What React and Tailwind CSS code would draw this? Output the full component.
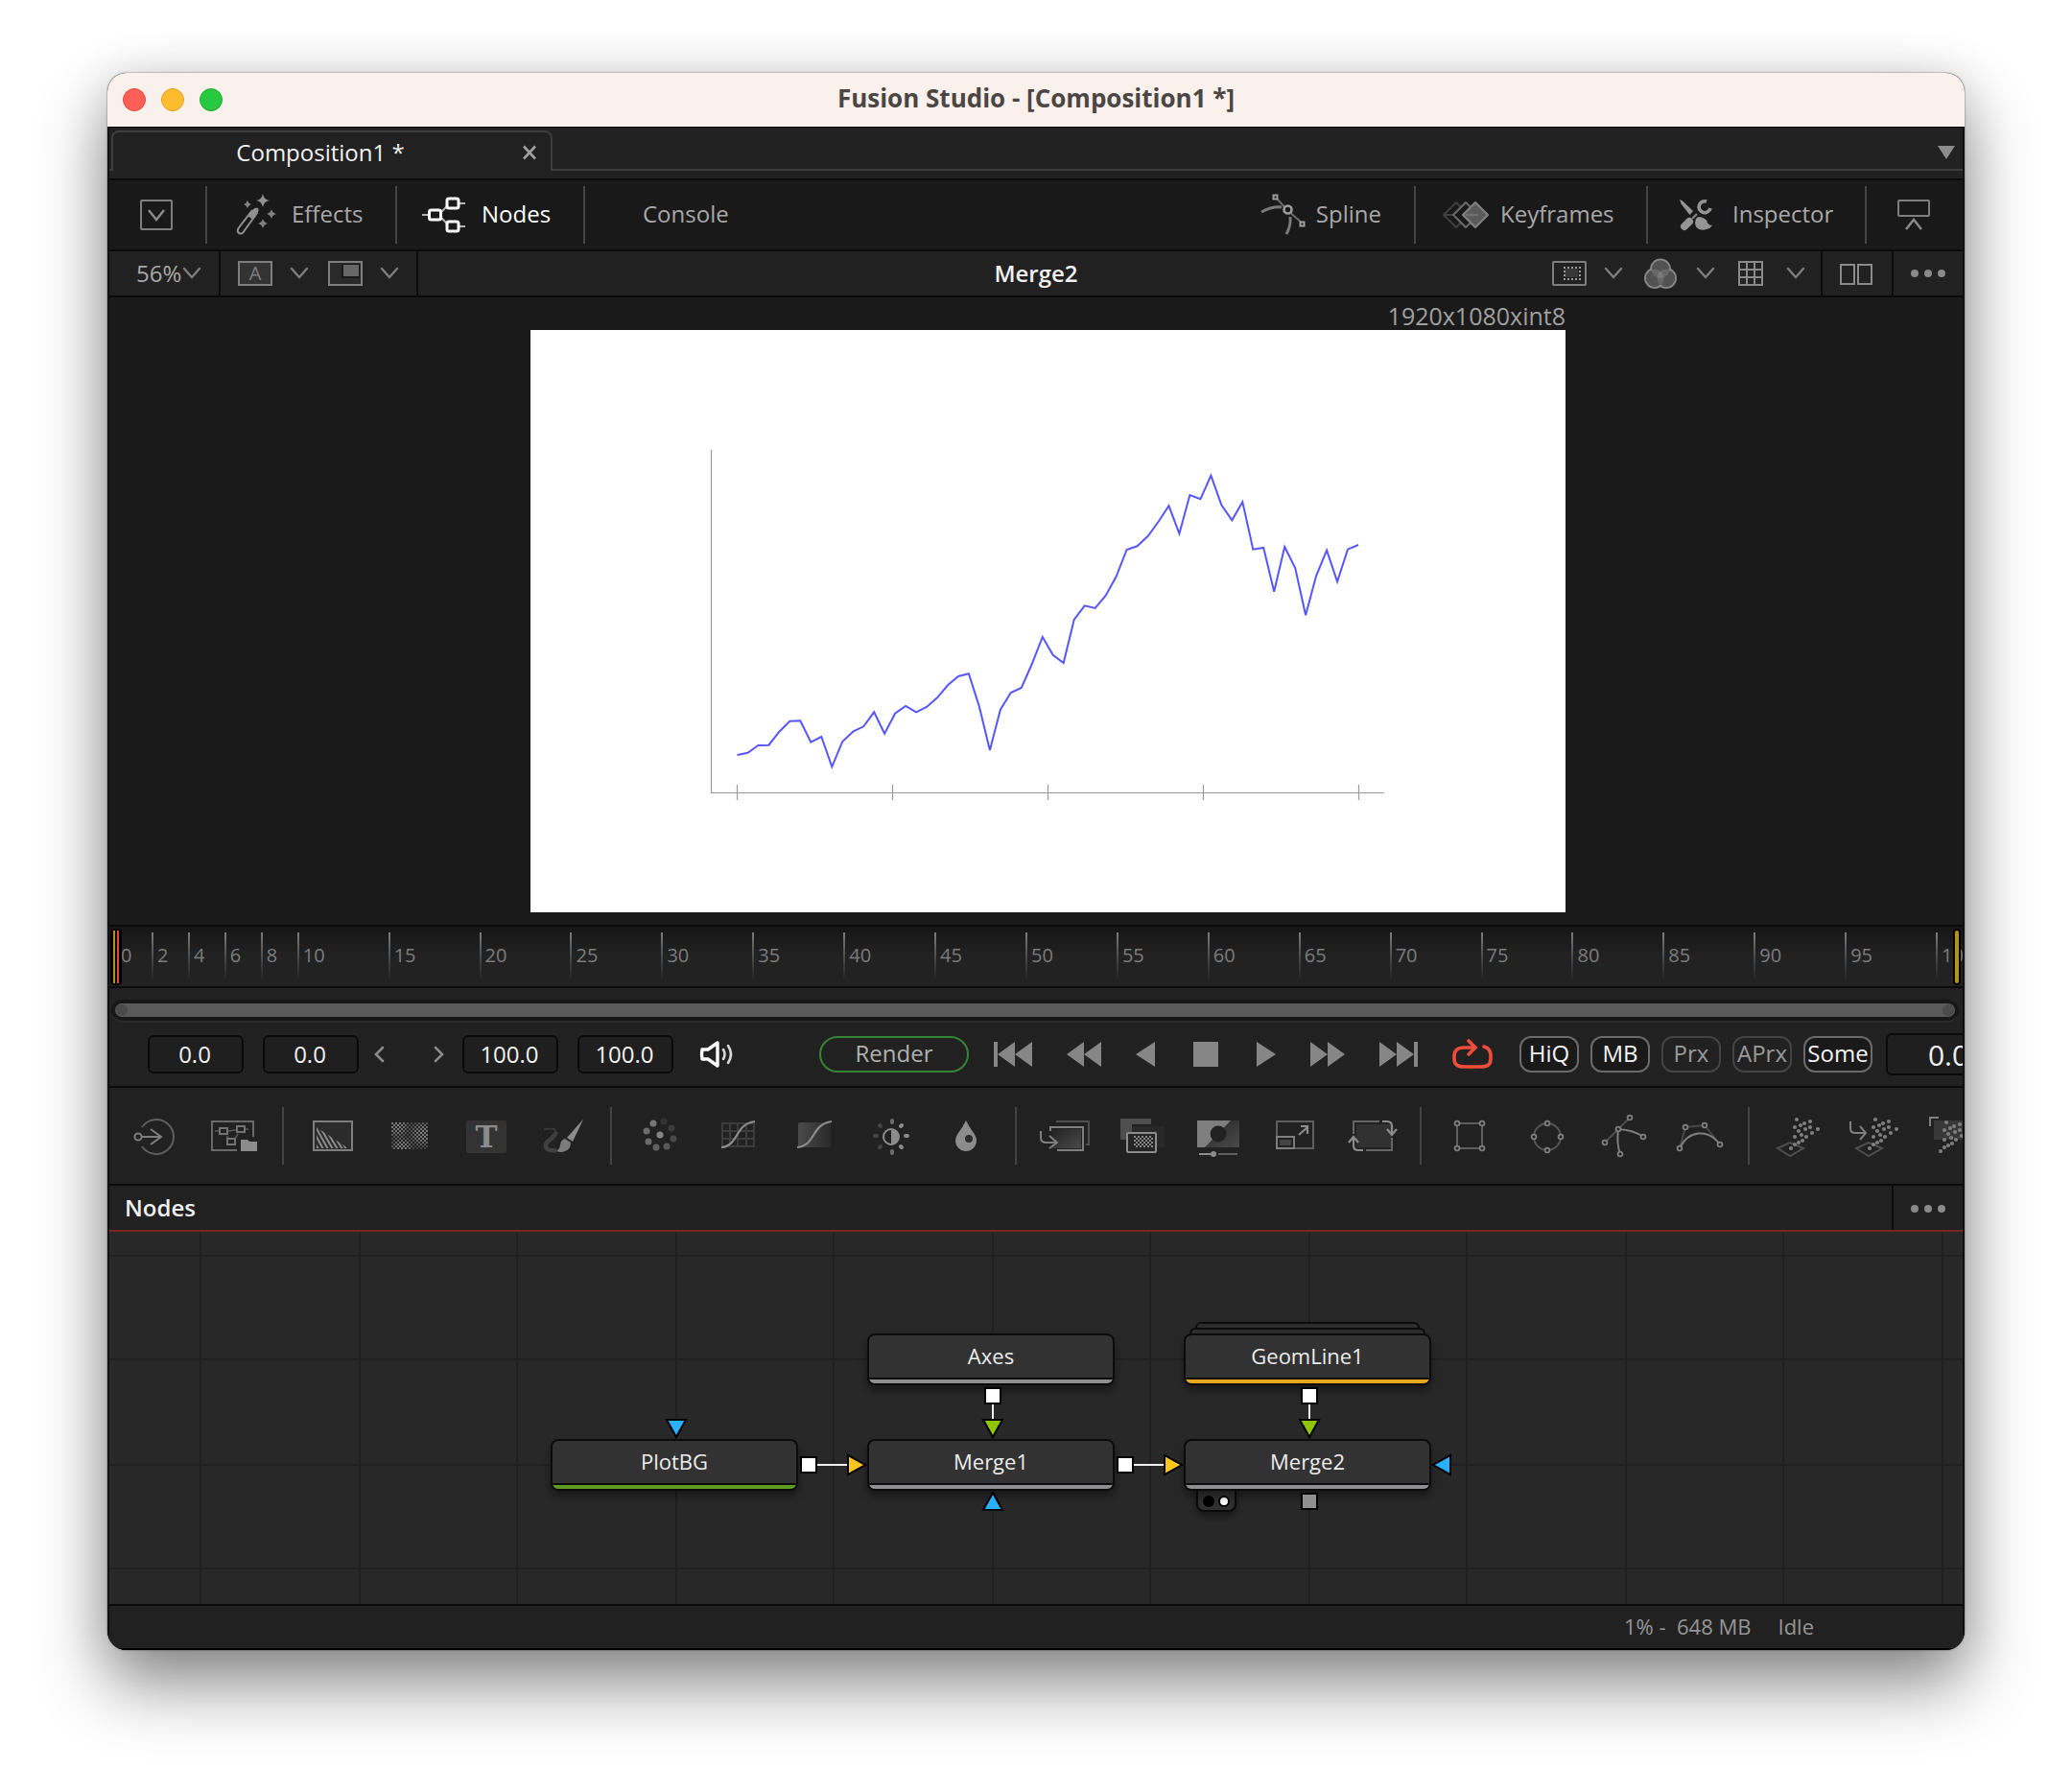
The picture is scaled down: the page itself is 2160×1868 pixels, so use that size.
import React from "react";

const sans = "font-['Open_Sans','Noto_Sans',sans-serif]";

/* ---------- shared pieces ---------- */

function Svg({ w, h, x = 0, y = 0, children, className = "" }) {
  return (
    <svg
      width={w}
      height={h}
      viewBox={`${x} ${y} ${w} ${h}`}
      fill="none"
      aria-hidden="true"
      className={`shrink-0 ${className}`}
    >
      {children}
    </svg>
  );
}

function Chevron() {
  return (
    <Svg w={20} h={14}>
      <path d="M2 2 L10 11 L18 2" stroke="#7d7d7d" strokeWidth="2.4" strokeLinecap="round" />
    </Svg>
  );
}

function Dots() {
  return (
    <Svg w={36} h={10}>
      {[4, 18, 32].map((cx) => (
        <circle key={cx} cx={cx} cy="5" r="4" fill="#8a8a8a" />
      ))}
    </Svg>
  );
}

function Divider({ tall = false }) {
  return <div className={`w-0.5 shrink-0 bg-[#444444] ${tall ? "h-[60px]" : "h-full"}`} />;
}

function IconButton({ label, children, className = "" }) {
  return (
    <button type="button" aria-label={label} className={`flex shrink-0 items-center justify-center ${className}`}>
      {children}
    </button>
  );
}

/* ---------- title and tabs ---------- */

function TitleBar() {
  return (
    <header className="relative flex h-[57px] items-center justify-center border-b border-black bg-[#fbf1ec]">
      <div className="absolute inset-y-0 left-4 flex items-center gap-4">
        <button type="button" aria-label="Close" className="size-6 rounded-full border border-[#e2463f] bg-[#ff5f57]" />
        <button type="button" aria-label="Minimize" className="size-6 rounded-full border border-[#e0a028] bg-[#febc2e]" />
        <button type="button" aria-label="Zoom" className="size-6 rounded-full border border-[#1fab30] bg-[#28c840]" />
      </div>
      <h1 className="pb-1 text-[26px] leading-8 font-bold text-[#4b4644]">Fusion Studio - [Composition1 *]</h1>
    </header>
  );
}

function TabBar() {
  return (
    <div className="flex h-[55px] flex-col border-b-2 border-[#0b0b0b] bg-[#212121] pt-[3px]">
      <div className="flex h-[42px]">
        <div className="w-0.5 border-b-2 border-[#3d3d3d]" />
        <div className="flex w-[460px] items-center rounded-t-lg border-2 border-b-0 border-[#3d3d3d]">
          <span className="w-5" />
          <span className="flex-1 pt-0.5 text-center text-2xl text-[#f2f2f2]">Composition1 *</span>
          <IconButton label="Close tab" className="w-11 pt-0.5">
            <Svg w={16} h={16}>
              <path d="M2 1.5 L14 14.5 M14 1.5 L2 14.5" stroke="#a0a0a0" strokeWidth="2.6" />
            </Svg>
          </IconButton>
        </div>
        <div className="flex flex-1 items-center justify-end border-b-2 border-[#3d3d3d] pr-2">
          <IconButton label="Tab list" className="pt-1.5">
            <Svg w={18} h={14}>
              <path d="M0 0 H18 L9 14 Z" fill="#8c8c8c" />
            </Svg>
          </IconButton>
        </div>
      </div>
    </div>
  );
}

/* ---------- main toolbar ---------- */

function WandIcon() {
  const spark = (x, y, r) =>
    `M${x} ${y - r} Q${x + 1} ${y - 1} ${x + r} ${y} Q${x + 1} ${y + 1} ${x} ${y + r} Q${x - 1} ${y + 1} ${x - r} ${y} Q${x - 1} ${y - 1} ${x} ${y - r} Z`;
  return (
    <Svg w={42} h={44}>
      <path d="M17 17 L2.5 36 Q0.5 40 4 41.5 Q6.5 42 8 39.5 L22 20" stroke="#909090" strokeWidth="2" />
      <path d="M17 17 Q21 13.500 23 15 Q24.500 17 22 21 L18 27 L12 23 Z" fill="#909090" />
      <path d={spark(28, 7, 7)} fill="#909090" />
      <path d={spark(12, 11, 4)} fill="#808080" />
      <path d={spark(37, 21, 5)} fill="#808080" />
      <path d={spark(28, 31, 5)} fill="#808080" />
    </Svg>
  );
}

function NodesIcon() {
  return (
    <Svg w={46} h={38}>
      <path d="M0 19 H6 M20 16 L27 9 M20 22 L27 29 M39 7 H45 M39 31 H45" stroke="#b5b5b5" strokeWidth="2" />
      <g stroke="#ffffff" strokeWidth="3">
        <rect x="7.500" y="14" width="12" height="10" rx="2" />
        <rect x="26" y="2" width="12" height="10" rx="2" />
        <rect x="26" y="26" width="12" height="10" rx="2" />
      </g>
    </Svg>
  );
}

function SplineIcon() {
  return (
    <Svg w={48} h={44}>
      <path d="M16 4 L28 17 L44 31" stroke="#6a6a6a" strokeWidth="2" />
      <path d="M1 19 Q12 13 22 14 M31 24 Q32 33 27 42" stroke="#7a7a7a" strokeWidth="3" />
      <circle cx="28.500" cy="16.500" r="4" fill="#191919" stroke="#9c9c9c" strokeWidth="2.6" />
      <rect x="13.500" y="1.500" width="4" height="4" fill="#191919" stroke="#9c9c9c" strokeWidth="2" />
      <rect x="41.500" y="29.500" width="4" height="4" fill="#191919" stroke="#9c9c9c" strokeWidth="2" />
    </Svg>
  );
}

function KeyframesIcon() {
  return (
    <Svg w={48} h={28}>
      <path d="M1 14 L14 1 L27 14 L14 27 Z M1 14 H20" stroke="#3f3f3f" strokeWidth="2" />
      <path d="M11 14 L24 1 L37 14 L24 27 Z" fill="#191919" stroke="#6a6a6a" strokeWidth="2" />
      <path d="M21 14 L34 1 L47 14 L34 27 Z" fill="#5a5a5a" stroke="#838383" strokeWidth="2" />
      <path d="M24 14 H37" stroke="#7a7a7a" strokeWidth="1.500" />
    </Svg>
  );
}

function InspectorIcon() {
  return (
    <Svg w={36} h={34}>
      <path d="M1 1 L4 2.500 L15 13 L11.500 17 L2.500 5.500 Z" fill="#959595" />
      <path d="M29 3 A6 6 0 1 0 33 10" stroke="#959595" strokeWidth="3.600" />
      <path d="M14 21 L19 16" stroke="#808080" strokeWidth="2.400" />
      <path d="M6 29 L11 24" stroke="#959595" strokeWidth="8" strokeLinecap="round" />
      <path d="M18 21 Q20 18 24 19.500 Q30 22 30 25.500 Q32 28 35 28 Q33 31 29 32 Q22 34 18.500 30 Q16 26 18 21 Z" fill="#959595" />
    </Svg>
  );
}

function ToolTab({ icon, label, className, active = false }) {
  return (
    <button
      type="button"
      className={`flex h-full shrink-0 items-center text-2xl ${active ? "text-white" : "text-[#a8a8a8]"} ${className}`}
    >
      {icon}
      <span className="pb-0.5">{label}</span>
    </button>
  );
}

function MainToolbar() {
  return (
    <nav className="flex h-[74px] border-b-2 border-[#0b0b0b] bg-[#191919] py-1.5">
      <IconButton label="Toggle panel" className="w-[100px] pr-0.5">
        <Svg w={34} h={32}>
          <rect x="1" y="1" width="32" height="30" rx="1" stroke="#7e7e7e" strokeWidth="2" />
          <path d="M9 11 L17 21 L25 11" stroke="#8a8a8a" strokeWidth="2.400" />
        </Svg>
      </IconButton>
      <Divider />
      <ToolTab icon={<WandIcon />} label="Effects" className="w-[196px] gap-4 pl-[30px]" />
      <Divider />
      <ToolTab icon={<NodesIcon />} label="Nodes" active className="w-[194px] gap-4 pl-[26px]" />
      <Divider />
      <ToolTab label="Console" className="w-[194px] pl-[60px]" />
      <div className="flex-1" />
      <ToolTab icon={<SplineIcon />} label="Spline" className="gap-2.5 pr-[34px]" />
      <Divider />
      <ToolTab icon={<KeyframesIcon />} label="Keyframes" className="w-[240px] gap-3 pl-7" />
      <Divider />
      <ToolTab icon={<InspectorIcon />} label="Inspector" className="w-[226px] gap-5 pl-8" />
      <Divider />
      <IconButton label="Toggle viewer" className="w-[100px] pr-0.5">
        <Svg w={34} h={32}>
          <rect x="1" y="1" width="32" height="16" rx="1" stroke="#7e7e7e" strokeWidth="2" />
          <path d="M9 31 L17 21 L25 31" stroke="#8a8a8a" strokeWidth="2.400" />
        </Svg>
      </IconButton>
    </nav>
  );
}

/* ---------- viewer ---------- */

function ChannelsIcon() {
  const lobes = [
    [17, 11.5],
    [11, 21],
    [23, 21],
  ];
  return (
    <Svg w={34} h={32}>
      {lobes.map(([cx, cy]) => (
        <circle key={cx} cx={cx} cy={cy} r="10" stroke="#858585" strokeWidth="2" />
      ))}
      {lobes.map(([cx, cy]) => (
        <circle key={cx} cx={cx} cy={cy} r="9" fill="#383838" />
      ))}
      {lobes.map(([cx, cy]) => (
        <circle key={cx} cx={cx} cy={cy} r="9.5" fill="#cccccc" fillOpacity="0.18" />
      ))}
    </Svg>
  );
}

function ViewerHeader() {
  return (
    <div className="grid h-12 grid-cols-[1fr_auto_1fr] border-b-2 border-[#0b0b0b] bg-[#212121]">
      <div className="flex">
        <label className="flex w-[116px] items-center border-r-2 border-[#0b0b0b] pl-7">
          <select aria-label="Viewer zoom" className="appearance-none bg-transparent text-2xl text-[#a8a8a8]">
            <option>56%</option>
          </select>
          <Chevron />
        </label>
        <div className="flex w-[206px] items-center border-r-2 border-[#0b0b0b] pl-[18px]">
          <IconButton label="Buffer" className="mr-[18px]">
            <Svg w={36} h={26}>
              <rect x="1" y="1" width="34" height="24" fill="#333333" stroke="#7e7e7e" strokeWidth="2" />
              <text x="18" y="20" textAnchor="middle" fontSize="20" fill="#7e7e7e" className={sans}>A</text>
            </Svg>
          </IconButton>
          <IconButton label="Buffer options" className="mr-5"><Chevron /></IconButton>
          <IconButton label="Sub view" className="mr-[18px]">
            <Svg w={36} h={26}>
              <rect x="1" y="1" width="34" height="24" fill="#2a2a2a" stroke="#7e7e7e" strokeWidth="2" />
              <rect x="14" y="3" width="19" height="15" fill="#191919" />
              <rect x="16" y="4" width="16" height="12" fill="#666666" />
            </Svg>
          </IconButton>
          <IconButton label="Sub view options"><Chevron /></IconButton>
        </div>
      </div>
      <h2 className="self-center text-2xl leading-8 font-semibold text-[#f0f0f0]">Merge2</h2>
      <div className="flex items-center justify-end">
        <IconButton label="Region" className="mr-[18px]">
          <Svg w={36} h={26}>
            <rect x="1" y="1" width="34" height="24" rx="1" stroke="#7e7e7e" strokeWidth="2" />
            <rect x="13" y="8" width="14" height="9" fill="#383838" />
            <path d="M12 7 H30 M12 19 H30" stroke="#9a9a9a" strokeWidth="2" strokeDasharray="2 2" />
            <path d="M13 10 V18 M29 10 V18" stroke="#9a9a9a" strokeWidth="2" strokeDasharray="2 2" />
          </Svg>
        </IconButton>
        <IconButton label="Region options" className="mr-[22px]"><Chevron /></IconButton>
        <IconButton label="Color channels" className="mr-5"><ChannelsIcon /></IconButton>
        <IconButton label="Channel options" className="mr-6"><Chevron /></IconButton>
        <IconButton label="Grid" className="mr-6">
          <Svg w={26} h={26}>
            <path d="M1 1 H25 V25 H1 Z M9 1 V25 M17 1 V25 M1 9 H25 M1 17 H25" stroke="#8a8a8a" strokeWidth="2" />
          </Svg>
        </IconButton>
        <IconButton label="Grid options" className="mr-4"><Chevron /></IconButton>
        <IconButton label="Split view" className="h-full w-[74px] border-l-2 border-[#0b0b0b] pr-0.5">
          <Svg w={34} h={22} className="mt-0.5">
            <path d="M1 1 H15 V21 H1 Z M19 1 H33 V21 H19 Z" stroke="#8a8a8a" strokeWidth="2" />
          </Svg>
        </IconButton>
        <IconButton label="Viewer menu" className="h-full w-[74px] border-l-2 border-[#0b0b0b]"><Dots /></IconButton>
      </div>
    </div>
  );
}

const series = [
  443, 440.7, 433, 432.7, 418.7, 407.7, 407.3, 429.7, 424, 455.3, 429, 418.7, 413.3, 398.3, 420.7, 399.7, 392, 398.3,
  393, 383.3, 370.3, 361, 358.3, 392.7, 438, 395.7, 378, 373, 348, 320, 338.7, 347, 302, 287.3, 290, 277, 257, 229,
  225.3, 215, 200, 183.3, 212.3, 172, 176.3, 151.7, 182.3, 198.3, 179.3, 228.7, 227, 272.7, 226, 248, 297.3, 256.3,
  229.7, 262.3, 228.7, 224,
];

function Viewer() {
  const points = series.map((y, i) => `${(215.5 + (i * 647.5) / 59).toFixed(1)},${y}`).join(" ");
  return (
    <section className="flex justify-center border-b-2 border-[#0b0b0b] bg-[#1a1a1a] pb-[13px] pl-[25px]">
      <div>
        <p className="h-[34px] text-right text-[25px] leading-[38px] text-[#a0a0a0]">1920x1080xint8</p>
        <svg width="1079" height="607" viewBox="0 0 1079 607" fill="none" className="bg-white" role="img" aria-label="Line plot">
          <path
            d="M188.500 125 V482.500 H890 M215.500 474 V490 M377.500 474 V490 M539.500 474 V490 M701.500 474 V490 M863.500 474 V490"
            stroke="#999999"
            strokeWidth="1.200"
          />
          <polyline points={points} stroke="#5656ff" strokeWidth="2" />
        </svg>
      </div>
    </section>
  );
}

/* ---------- timeline ---------- */

function Tick({ label, className }) {
  return (
    <div className={`flex min-w-0 gap-1 ${className}`}>
      <div className="h-[50px] w-0.5 shrink-0 bg-linear-to-b from-[#7c7c7c] to-[#212121]" />
      <span className="text-xl leading-[48px] whitespace-nowrap text-[#7c7c7c]">{label}</span>
    </div>
  );
}

function Timeline() {
  return (
    <div className="relative flex h-16 overflow-hidden border-b-2 border-[#0b0b0b] bg-linear-to-b from-[#161616] to-[#222222] to-50% pt-1.5 pl-1.5">
      {[0, 2, 4, 6, 8].map((n) => (
        <Tick key={n} label={n} className="flex-[2]" />
      ))}
      {[10, 15, 20, 25, 30, 35, 40, 45, 50, 55, 60, 65, 70, 75, 80, 85, 90, 95].map((n) => (
        <Tick key={n} label={n} className="flex-[5]" />
      ))}
      <Tick label={100} className="w-7 shrink-0" />
      <div className="absolute top-0.5 left-px flex h-[59px] gap-0.5 rounded-sm border-2 border-black bg-black px-px">
        <div className="w-0.5 bg-[#b8901c]" />
        <div className="w-0.5 bg-[#e04b32]" />
      </div>
      <div className="absolute top-0.5 right-[2px] h-[59px] w-2 rounded-sm border-2 border-black bg-[#b8901c]" />
    </div>
  );
}

function RangeBar() {
  return (
    <div className="bg-[#212121] pt-3 pr-1 pl-0.5">
      <div className="flex h-6 rounded-full border-b-2 border-[#2b2b2b] bg-[#171717] px-1 py-1">
        <div className="flex flex-1 items-center justify-between rounded-full bg-[#5a5a5a] px-px">
          <div className="size-3 rounded-full bg-[#4b4b4b]" />
          <div className="size-3 rounded-full bg-[#4b4b4b]" />
        </div>
      </div>
    </div>
  );
}

/* ---------- transport ---------- */

function Field({ label, value }) {
  return (
    <input
      aria-label={label}
      defaultValue={value}
      className="h-10 w-[100px] shrink-0 rounded-md border-2 border-[#0a0a0a] bg-[#1f1f1f] pr-0.5 pb-px text-center text-2xl text-[#f2f2f2]"
    />
  );
}

function Arrow({ d, label }) {
  return (
    <IconButton label={label}>
      <Svg w={12} h={18}>
        <path d={d} stroke="#8a8a8a" strokeWidth="2.600" strokeLinecap="round" />
      </Svg>
    </IconButton>
  );
}

function Play({ label, w, d }) {
  return (
    <IconButton label={label}>
      <Svg w={w} h={26}>
        <path d={d} fill="#868686" />
      </Svg>
    </IconButton>
  );
}

function Toggle({ label, on = false, wide = false }) {
  return (
    <button
      type="button"
      aria-pressed={on}
      className={`flex h-[38px] shrink-0 items-center justify-center rounded-xl border-2 pb-0.5 text-2xl ${wide ? "w-[72px]" : "w-[62px]"} ${on ? "border-[#6a6a6a] bg-[#191919] text-[#f5f5f5]" : "border-[#444444] text-[#9a9a9a]"}`}
    >
      {label}
    </button>
  );
}

function Transport() {
  return (
    <div className="flex h-[68px] items-center overflow-hidden border-b-2 border-[#0b0b0b] bg-[#212121] pl-10">
      <div className="flex shrink-0 gap-5">
        <Field label="Global start" value="0.0" />
        <Field label="Render start" value="0.0" />
      </div>
      <div className="mr-[18px] ml-4 flex shrink-0 gap-[50px]">
        <Arrow label="Range back" d="M9 2 L2 9 L9 16" />
        <Arrow label="Range forward" d="M2 2 L9 9 L2 16" />
      </div>
      <div className="flex shrink-0 gap-5">
        <Field label="Render end" value="100.0" />
        <Field label="Global end" value="100.0" />
      </div>
      <IconButton label="Audio" className="ml-[27px]">
        <Svg w={36} h={30}>
          <path d="M19 3 V27 L9 20 H3 Q2 15 3 10 H9 Z" stroke="#ffffff" strokeWidth="3.400" strokeLinejoin="round" />
          <path d="M25 10 Q28 15 25 20 M30 6 Q36 15 30 24" stroke="#d8d8d8" strokeWidth="2.600" strokeLinecap="round" />
        </Svg>
      </IconButton>
      <button
        type="button"
        className="ml-[89px] flex h-[38px] w-[156px] shrink-0 items-center justify-center rounded-full border-2 border-[#338433] pb-0.5 text-2xl text-[#b0b0b0]"
      >
        Render
      </button>
      <div className="ml-[26px] flex shrink-0 gap-9">
        <Play label="First frame" w={40} d="M0 0 H4 V26 H0 Z M22 0 V26 L4 13 Z M40 0 V26 L22 13 Z" />
        <Play label="Fast reverse" w={36} d="M18 0 V26 L0 13 Z M36 0 V26 L18 13 Z" />
        <Play label="Play reverse" w={20} d="M20 0 V26 L0 13 Z" />
      </div>
      <div className="mx-10 flex shrink-0">
        <Play label="Stop" w={26} d="M0 0 H26 V26 H0 Z" />
      </div>
      <div className="flex shrink-0 gap-9">
        <Play label="Play" w={20} d="M0 0 V26 L20 13 Z" />
        <Play label="Fast forward" w={36} d="M0 0 V26 L18 13 Z M18 0 V26 L36 13 Z" />
        <Play label="Last frame" w={40} d="M0 0 V26 L18 13 Z M18 0 V26 L36 13 Z M36 0 H40 V26 H36 Z" />
        <IconButton label="Loop">
          <Svg w={42} h={34}>
            <path
              d="M23 10 H12 Q2 10 2 19 V22 Q2 30 12 30 H30 Q40 30 40 22 V18 Q40 11 33 9"
              stroke="#f04c3a"
              strokeWidth="3.600"
              strokeLinecap="round"
            />
            <path d="M17 3 L24 10 L17 17" stroke="#f04c3a" strokeWidth="3.600" strokeLinecap="round" />
          </Svg>
        </IconButton>
      </div>
      <div className="ml-7 flex shrink-0 gap-3">
        <Toggle label="HiQ" on />
        <Toggle label="MB" on />
        <Toggle label="Prx" />
        <Toggle label="APrx" />
        <Toggle label="Some" on wide />
      </div>
      <input
        aria-label="Current time"
        defaultValue="0.0"
        className="ml-3.5 h-11 w-[130px] shrink-0 rounded-md border-2 border-[#0a0a0a] bg-[#1f1f1f] text-center text-3xl text-[#f2f2f2]"
      />
    </div>
  );
}

/* ---------- tool shelf: every icon is drawn around its own centre ---------- */

const ink = "#7e7e7e";
const dim = "#4e4e4e";
const lit = "#8c8c8c";

const particles = [
  [-1, -17], [13, -15], [7, -13], [3, -11], [-3, -9], [13, -9], [8, -7], [21, -7], [1, -5], [15, -3], [-3, 1], [4, -1],
  [9, 1], [5, 5], [1, 7], [-3, 9], [-7, 13],
];

function Particles({ dx = 0, dy = 0 }) {
  return particles.map(([x, y]) => <circle key={`${x} ${y}`} cx={x + dx} cy={y + dy} r="2.100" fill={ink} />);
}

function Handles({ at }) {
  return at.map(([x, y]) => (
    <circle key={`${x} ${y}`} cx={x} cy={y} r="2.400" fill="#212121" stroke={ink} strokeWidth="1.800" />
  ));
}

const shelf = [
  [
    ["Import", <g stroke={ink} strokeWidth="2">
      <path d="M-16 -9 A18 18 0 1 1 -16 11" stroke="#5e5e5e" />
      <circle cx="-20" cy="1" r="3.600" />
      <path d="M-16 1 H4 M-7 -7 L4 1 L-7 9" />
    </g>],
    ["Macro", <>
      <path d="M20 1 V-15 H-23 V15 H3" stroke="#686868" strokeWidth="2" />
      <path d="M-20 -5 H-15 M-7 -5 L2 -6 M11 -7 H15 M-8 0 L-5 3 M1 3 L4 -2" stroke="#585858" strokeWidth="1.500" />
      <g stroke="#727272" strokeWidth="2">
        <rect x="-15" y="-8" width="8" height="6" /><rect x="3" y="-10" width="8" height="6" /><rect x="-7" y="3" width="8" height="6" />
      </g>
      <path d="M7 4 H14 L16 6 H24 V16 H7 Z" fill={lit} />
    </>],
  ],
  [
    ["Background", <>
      <rect x="-19" y="-15" width="40" height="30" fill="#2b2b2b" stroke={ink} strokeWidth="2" />
      <path
        d="M-22 -10 L-9 14 M-18 -11 L-4 14 M-14 -12 L1 14 M-9 -11 L6 14 M-4 -11 L11 14 M1 -10 L15 14 M-27 -8 L-14 14 M7 -8 L20 14"
        stroke={lit}
        strokeWidth="2"
        clipPath="url(#wedge)"
      />
    </>],
    ["Fast noise", <rect x="-18" y="-14" width="38" height="28" fill="url(#checker)" mask="url(#cloud)" />],
    ["Text", <>
      <rect x="-20" y="-16" width="42" height="34" rx="2" fill="#333333" />
      <text x="1" y="12" textAnchor="middle" fontSize="31" fontWeight="700" fill={lit} className="font-['DejaVu_Serif',serif]">T</text>
    </>],
    ["Paint", <>
      <path d="M-19 -7 Q-4 -9 -7 -3" stroke="#383838" strokeWidth="2" />
      <path d="M-6 -4 Q-8 1 -14 5 Q-18 8 -17 12 Q-15 16 -6 15" stroke="#404040" strokeWidth="4.500" />
      <path d="M22 -17 L11 6 L5 2 L20 -15 Z" fill={lit} />
      <path d="M3 3 L9 7 Q9 14 3 16 Q-1 18 -6 16 Q-2 13 -2 9 Q-1 4 3 3 Z" fill="#7c7c7c" />
    </>],
  ],
  [
    ["Blur", [
      [0, -1, "#848484"], [-7, -13, "#787878"], [4, -15, "#333333"], [12, -8, "#3d3d3d"], [14, 3, "#484848"],
      [7, 11, "#585858"], [-4, 12, "#606060"], [-12, 6, "#6a6a6a"], [-14, -5, "#6c6c6c"],
    ].map(([x, y, c]) => <circle key={`${x} ${y}`} cx={x} cy={y} r="3.500" fill={c} />)],
    ["Color curves", <>
      <path d="M-15 -13 H18 V11 H-15 Z M-7 -13 V11 M1 -13 V11 M10 -13 V11 M-15 -5 H18 M-15 3 H18" stroke="#3c3c3c" strokeWidth="2" />
      <path d="M-16 12 C3 10 -3 -12 19 -15" stroke={lit} strokeWidth="2.200" />
    </>],
    ["Color gain", <>
      <rect x="-16" y="-14" width="34" height="26" rx="2" fill="url(#shade)" />
      <path d="M-17 12 C3 10 -3 -12 19 -15" stroke={lit} strokeWidth="2.200" />
    </>],
    ["Brightness and contrast", <>
      <circle cx="1" cy="1" r="8" stroke={lit} strokeWidth="2" />
      <path d="M1 -7 A8 8 0 0 1 1 9 Z" fill={lit} />
      <g strokeWidth="4" strokeLinecap="round">
        <path d="M2 -16 V-14 M2 16 V18" stroke="#6c6c6c" />
        <path d="M11 -10 L12 -11 M16 0 H18 M11 11 L12 12" stroke={lit} />
        <path d="M-10 -10 L-11 -11 M-16 0 H-14 M-10 11 L-11 12" stroke="#444444" />
      </g>
    </>],
    ["Hue", <>
      <path d="M-1 -16 Q3 -8 7 -3 Q10 1 10 5 A11 11 0 0 1 -12 5 Q-12 1 -9 -3 Q-5 -8 -1 -16 Z" fill={lit} />
      <circle cx="2" cy="3" r="4" fill="#2c2c2c" />
    </>],
  ],
  [
    ["Merge", <>
      <path d="M-9 -15 H25 V9 H22" stroke={dim} strokeWidth="2" />
      <rect x="-13" y="-7" width="30" height="20" fill="url(#shadeR)" />
      <path d="M-15 -5 V-9 H19 V15 H-8" stroke={ink} strokeWidth="2" />
      <path d="M-25 -5 V2 Q-25 7 -19 7 H-8 M-16 -0 L-8 7 L-16 13" stroke={ink} strokeWidth="2" />
    </>],
    ["Channel booleans", <>
      <rect x="-22" y="-18" width="32" height="22" rx="1" fill="#4e4e4e" />
      <rect x="-10" y="-12" width="20" height="8" fill="#1f1f1f" />
      <rect x="-10" y="-10" width="34" height="22" rx="1" fill="#292929" />
      <rect x="-15" y="-3" width="30" height="20" rx="1" fill="#242424" stroke={lit} strokeWidth="2" />
      <rect x="-8" y="0" width="20" height="12" fill="url(#checker)" />
    </>],
    ["Matte control", <>
      <rect x="-22" y="-16" width="44" height="28" rx="1" fill="url(#shadeR)" />
      <path d="M-22 -16 H13 L-14 12 H-22 Z" fill={ink} />
      <circle cx="0" cy="-2" r="8.400" fill="#212121" />
      <path d="M-20 19 H-8" stroke={lit} strokeWidth="2" />
      <path d="M0 19 H20" stroke="#606060" strokeWidth="2" />
      <circle cx="-5" cy="19" r="3" fill={lit} />
    </>],
    ["Resize", <>
      <rect x="-19" y="-15" width="38" height="28" stroke="#5e5e5e" strokeWidth="2" />
      <rect x="-19" y="1" width="18" height="12" fill="#212121" stroke={ink} strokeWidth="2" />
      <rect x="-16" y="4" width="12" height="6" fill="#444444" />
      <path d="M4 -1 L13 -9 M6 -10 H13 V-2" stroke={lit} strokeWidth="2.200" />
    </>],
    ["Transform", <>
      <rect x="-16" y="-12" width="36" height="24" fill="#313131" />
      <path d="M-19 -2 V-15 H8 M21 2 V15 H-6" stroke="#666666" strokeWidth="2" />
      <path d="M11 -15 H16 Q21 -15 21 -10 V-2 M16 -7 L21 -1 L26 -7 M-9 15 H-14 Q-19 15 -19 10 V3 M-24 7 L-19 1 L-14 7" stroke={lit} strokeWidth="2.200" />
    </>],
  ],
  [
    ["Rectangle mask", <>
      <rect x="-13" y="-13" width="26" height="26" stroke="#5e5e5e" strokeWidth="2" />
      <Handles at={[[-13, -13], [13, -13], [-13, 13], [13, 13]]} />
    </>],
    ["Ellipse mask", <>
      <circle cx="1" cy="1" r="14" stroke="#565656" strokeWidth="2" />
      <Handles at={[[-13, 1], [15, 1], [1, -13], [1, 15]]} />
    </>],
    ["Polygon mask", <>
      <path d="M7 -19 L-19 7" stroke={dim} strokeWidth="2" />
      <path d="M21 1 Q11 -6 -5 -7 Q-7 8 -3 19" stroke={ink} strokeWidth="2" />
      <Handles at={[[7, -19], [-5, -7], [-19, 7], [21, 1], [-3, 19]]} />
    </>],
    ["B-spline mask", <>
      <path d="M-21 13 L-15 -9 L5 -11 L21 9" stroke="#474747" strokeWidth="2" />
      <path d="M-21 13 C-12 -6 8 -8 21 9" stroke={ink} strokeWidth="2" />
      <Handles at={[[-15, -9], [5, -11], [-21, 13], [21, 9]]} />
    </>],
  ],
  [
    ["Particle emitter", <>
      <path d="M-21 13 L-8 7 L6 13 L-8 21 Z" stroke={dim} strokeWidth="2" />
      <Particles />
    </>],
    ["Particle merge", <>
      <path d="M-19 13 L-6 7 L8 13 L-6 21 Z" stroke={dim} strokeWidth="2" />
      <path d="M-25 -15 V-8 Q-25 -3 -20 -3 H-9 M-15 -10 L-9 -3 L-15 4" stroke={ink} strokeWidth="2" />
      <Particles dx={2} />
    </>],
    ["Particle render", <>
      <rect x="-18" y="-16" width="40" height="20" fill="#383838" />
      <path d="M-22 -10 V-19 H-13" stroke={ink} strokeWidth="2" />
      <Particles dx={-4} dy={3} />
    </>],
  ],
];

function Shelf() {
  return (
    <div className="flex h-[102px] items-center overflow-hidden border-b-2 border-[#0b0b0b] bg-[#212121]">
      <svg width="0" height="0" className="absolute" aria-hidden="true">
        <defs>
          <pattern id="checker" width="4" height="4" patternUnits="userSpaceOnUse">
            <path d="M0 0 H2 V2 H0 Z M2 2 H4 V4 H2 Z" fill="#868686" />
          </pattern>
          <clipPath id="wedge">
            <path d="M-16 -9 L17 13 H-16 Z" />
          </clipPath>
          <linearGradient id="shade" x1="0" y1="0" x2="1" y2="0">
            <stop offset="0" stopColor="#4a4a4a" />
            <stop offset="1" stopColor="#2a2a2a" />
          </linearGradient>
          <linearGradient id="shadeR" x1="0" y1="0" x2="1" y2="1">
            <stop offset="0" stopColor="#222222" />
            <stop offset="1" stopColor="#4a4a4a" />
          </linearGradient>
          <radialGradient id="blob">
            <stop offset="0" stopColor="#ffffff" />
            <stop offset="0.4" stopColor="#ffffff" stopOpacity="0.8" />
            <stop offset="1" stopColor="#ffffff" stopOpacity="0" />
          </radialGradient>
          <mask id="cloud">
            <rect x="-18" y="-14" width="38" height="28" fill="#484848" />
            <circle cx="-12" cy="-10" r="15" fill="url(#blob)" />
            <circle cx="15" cy="-2" r="16" fill="url(#blob)" />
            <circle cx="-7" cy="12" r="13" fill="url(#blob)" />
          </mask>
        </defs>
      </svg>
      {shelf.map((group, i) => (
        <React.Fragment key={group[0][0]}>
          {i > 0 && <Divider tall />}
          <div className="flex shrink-0 px-2.5">
            {group.map(([label, art]) => (
              <IconButton key={label} label={label} className="w-20">
                <Svg w={72} h={48} x={-36} y={-24}>{art}</Svg>
              </IconButton>
            ))}
          </div>
        </React.Fragment>
      ))}
    </div>
  );
}

/* ---------- node graph ---------- */

function NodeBox({ name, strip, place, stacked = false }) {
  return (
    <div className={`absolute w-[258px] ${place}`}>
      {stacked && (
        <>
          <div className="absolute -top-3 right-3 left-3 h-4 rounded-t-md border-2 border-[#0b0b0b] bg-[#2d2d2d]" />
          <div className="absolute -top-1.5 right-1.5 left-1.5 h-4 rounded-t-md border-2 border-[#0b0b0b] bg-[#2d2d2d]" />
        </>
      )}
      <div className="relative overflow-hidden rounded-lg border-2 border-[#0b0b0b] bg-[#323232] shadow-[0_6px_8px_rgba(0,0,0,0.4)]">
        <div className="h-11 text-center text-[22px] leading-[42px] text-[#ececec]">{name}</div>
        <div className={`h-1.5 border-t-2 border-[#0b0b0b] ${strip}`} />
      </div>
    </div>
  );
}

function Square({ x, y, fill = "#ffffff" }) {
  return <rect x={x - 8} y={y - 8} width="16" height="16" fill={fill} stroke="#000000" strokeWidth="2" />;
}

function Tri({ x, y, turn, fill }) {
  return (
    <path d="M-10 -9 H10 L0 9 Z" transform={`translate(${x} ${y}) rotate(${turn})`} fill={fill} stroke="#000000" strokeWidth="2" />
  );
}

function NodeGraph() {
  return (
    <section className="relative h-[390px] overflow-hidden border-b-2 border-[#0b0b0b] bg-[#282828]">
      <svg width="100%" height="388" fill="none" className="absolute inset-0" aria-hidden="true">
        {[95, 261, 425, 591, 755, 921, 1085, 1251, 1415, 1581, 1745, 1911, 2075].map((x) => (
          <path key={x} d={`M${x} 0 V388`} stroke="#202020" strokeWidth="2" />
        ))}
        {[25, 133, 243, 351].map((y) => (
          <path key={y} d={`M0 ${y} H4000`} stroke="#202020" strokeWidth="2" />
        ))}
      </svg>
      <NodeBox name="Axes" strip="bg-[#8f8f91]" place="top-[106px] left-[790px]" />
      <NodeBox name="GeomLine1" strip="bg-[#e2a71c]" place="top-[106px] left-[1120px]" stacked />
      <NodeBox name="PlotBG" strip="bg-[#5f9a22]" place="top-[216px] left-[460px]" />
      <NodeBox name="Merge1" strip="bg-[#8f8f91]" place="top-[216px] left-[790px]" />
      <div className="absolute top-[266px] left-[1133px] flex h-[26px] w-[42px] items-center justify-center gap-1 rounded-b-lg border-2 border-[#0b0b0b] bg-[#303030] pt-1 shadow-[0_5px_6px_rgba(0,0,0,0.4)]">
        <div className="size-3 rounded-full bg-black" />
        <div className="size-3 rounded-full border-2 border-black bg-white" />
      </div>
      <NodeBox name="Merge2" strip="bg-[#8f8f91]" place="top-[216px] left-[1120px]" />
      <svg width="1500" height="388" fill="none" className="absolute top-0 left-0" aria-hidden="true">
        <path d="M921 170 V200 M1251 170 V200 M728 243 H770 M1058 243 H1100" stroke="#f0f0f0" strokeWidth="2" />
        <Square x={921} y={171} />
        <Square x={1251} y={171} />
        <Square x={729} y={243} />
        <Square x={1059} y={243} />
        <Square x={1251} y={281} fill="#8f8f8f" />
        <Tri x={921} y={205} turn={0} fill="#8dc600" />
        <Tri x={1251} y={205} turn={0} fill="#8dc600" />
        <Tri x={591} y={205} turn={0} fill="#29b1ff" />
        <Tri x={921} y={281} turn={180} fill="#29b1ff" />
        <Tri x={779} y={243} turn={270} fill="#fcc71c" />
        <Tri x={1109} y={243} turn={270} fill="#fcc71c" />
        <Tri x={1389} y={243} turn={90} fill="#29b1ff" />
      </svg>
    </section>
  );
}

export default function App() {
  return (
    <div className="bg-white px-28 pt-[76px] pb-[148px]">
      <main
        className={`${sans} overflow-hidden rounded-[20px] bg-[#0b0b0b] shadow-[0_0_2px_rgba(0,0,0,0.6),0_36px_72px_rgba(0,0,0,0.45),0_4px_50px_rgba(0,0,0,0.12)]`}
      >
        <TitleBar />
        <div className="border-x-2 border-[#101010]">
          <TabBar />
          <MainToolbar />
          <ViewerHeader />
          <Viewer />
          <Timeline />
          <RangeBar />
          <Transport />
          <Shelf />
          <div className="flex h-12 items-center justify-between border-b-2 border-[#7a2523] bg-[#212121]">
            <h2 className="pl-4 text-2xl leading-8 font-semibold text-[#f0f0f0]">Nodes</h2>
            <IconButton label="Nodes menu" className="h-full w-[74px] border-l-2 border-[#0b0b0b] pt-0.5"><Dots /></IconButton>
          </div>
          <NodeGraph />
          <footer className="flex h-[46px] items-center justify-end gap-7 border-b-2 border-black bg-[#212121] pr-[155px] pb-0.5 text-[22px] text-[#969696]">
            <span className="whitespace-pre">1% -  648 MB</span>
            <span>Idle</span>
          </footer>
        </div>
      </main>
    </div>
  );
}
